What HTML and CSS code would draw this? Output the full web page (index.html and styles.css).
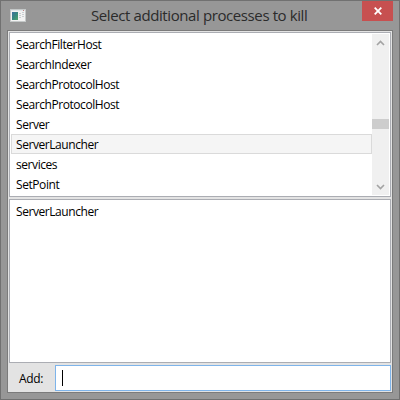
FILE: index.html
```html
<!DOCTYPE html>
<html lang="en">
<head>
<meta charset="utf-8">
<title>Select additional processes to kill</title>
<link rel="stylesheet" href="styles.css">
</head>
<body>
<div class="window">
  <header class="titlebar">
    <svg class="app-icon" width="16" height="13" viewBox="0 0 16 13">
      <defs><linearGradient id="pane" x1="0" y1="0" x2="1" y2="1"><stop offset="0" stop-color="#3d6fa0"/><stop offset=".5" stop-color="#36877f"/><stop offset="1" stop-color="#4fa56a"/></linearGradient></defs>
      <rect x=".5" y=".5" width="15" height="12" fill="#f2f2f2" stroke="#c4c8c8"/>
      <rect x="1" y="1" width="14" height="1" fill="#dfe5e8"/>
      <rect x="2" y="3" width="6" height="8" fill="url(#pane)"/>
      <path d="M9 4.5h2M9 6.5h2M9 8.5h2M12 3.5h2M12 5.5h2M12 7.5h2" stroke="#c9ced1"/>
      <path d="M13 1.5h1" stroke="#c08080"/>
    </svg>
    <h1 class="title">Select additional processes to kill</h1>
    <button class="close" aria-label="Close">
      <svg width="8" height="8" viewBox="0 0 8 8"><path d="M.7 .7L7.3 7.3M7.3 .7L.7 7.3" stroke="#fff" stroke-width="1.8"/></svg>
    </button>
  </header>
  <main class="client">
    <div class="list processes">
      <ul class="items">
        <li>SearchFilterHost</li>
        <li>SearchIndexer</li>
        <li>SearchProtocolHost</li>
        <li>SearchProtocolHost</li>
        <li>Server</li>
        <li class="selected">ServerLauncher</li>
        <li>services</li>
        <li>SetPoint</li>
      </ul>
      <div class="scrollbar">
        <svg width="9" height="6" viewBox="0 0 9 6"><path d="M1 5L4.5 1.5L8 5" fill="none" stroke="#a3a3a3" stroke-width="1.6"/></svg>
        <div class="track"><div class="thumb"></div></div>
        <svg width="9" height="6" viewBox="0 0 9 6"><path d="M1 1L4.5 4.5L8 1" fill="none" stroke="#a3a3a3" stroke-width="1.6"/></svg>
      </div>
    </div>
    <div class="list chosen">
      <ul class="items"><li>ServerLauncher</li></ul>
    </div>
    <div class="add-row">
      <span class="label">Add:</span>
      <div class="field"><span class="caret"></span></div>
    </div>
  </main>
</div>
</body>
</html>
```
FILE: styles.css
```css
* { box-sizing: border-box; }
body {
  margin: 0;
  font: 12px/18px "Open Sans", "Noto Sans", sans-serif;
  color: #000;
}
.window {
  width: 400px;
  height: 400px;
  padding: 0 6px 6px;
  border: 1px solid #717171;
  background: #979797;
  display: flex;
  flex-direction: column;
}
.titlebar {
  height: 29px;
  display: flex;
  align-items: flex-start;
  flex: none;
}
.app-icon { margin: 8px 0 0 3px; }
.title {
  flex: 1;
  margin: 4px 0 0 65px;
  font-size: 15px;
  line-height: 21px;
  font-weight: 400;
  letter-spacing: -0.4px;
  color: #2b2b2b;
  white-space: nowrap;
}
.close {
  width: 31px;
  height: 20px;
  padding: 0;
  border: 0;
  background: #c75050;
  display: flex;
  align-items: center;
  justify-content: center;
}
.client {
  height: 363px;
  border: 1px solid #7b7b7b;
  background: #e3e3e3;
  padding: 1px;
  display: flex;
  flex-direction: column;
  gap: 2px;
}
.list {
  border: 1px solid #abadb3;
  background: #fff;
  padding: 1px;
  display: flex;
}
.processes { height: 165px; }
.chosen { height: 164px; }
.items {
  list-style: none;
  margin: 0;
  padding: 0;
  flex: 1;
}
.items li {
  height: 20px;
  padding: 1px 4px 0;
  border: 1px solid transparent;
  letter-spacing: -0.43px;
}
.items .selected { background: #f5f5f5; border-color: #dadada; }
.scrollbar {
  width: 17px;
  padding: 6px 0 5px;
  background: #f0f0f0;
  display: flex;
  flex-direction: column;
  align-items: center;
}
.track { flex: 1; width: 100%; padding-top: 73px; }
.thumb { height: 10px; background: #cdcdcd; }
.add-row {
  height: 26px;
  display: flex;
  align-items: center;
}
.label { width: 46px; padding: 2px 0 0 10px; letter-spacing: -0.3px; }
.field {
  flex: 1;
  height: 26px;
  border: 1px solid #7eb4ea;
  background: #fff;
  padding: 4px 6px;
}
.caret { display: block; width: 1px; height: 16px; background: #000; }
```
